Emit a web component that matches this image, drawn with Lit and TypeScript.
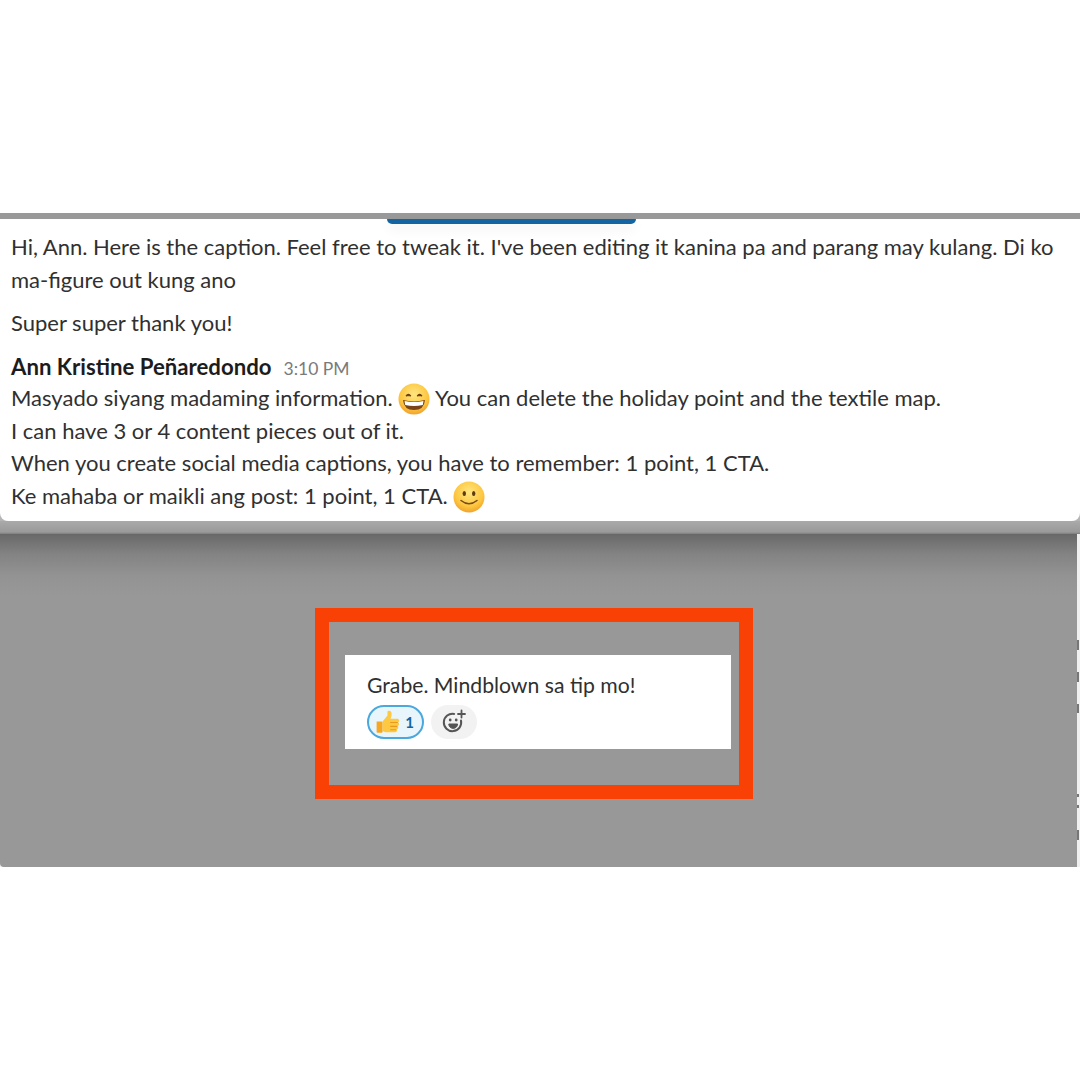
import { LitElement, css, html, svg } from 'lit';
import { customElement } from 'lit/decorators.js';

// clipped glyphs of the page behind, only their left edge shows at x 1077
const edgeMarks = [
  { gap: 106, h: 10 },
  { gap: 22, h: 10 },
  { gap: 22, h: 9 },
  { gap: 81, h: 3 },
  { gap: 8, h: 3 },
  { gap: 22, h: 10 },
];

const grinFace = svg`
  <path d="M8 13.2q2.4-3.6 4.8 0M19.2 13.2q2.4-3.6 4.8 0" fill="#7a4a16" stroke="#6b3d14" stroke-width="1.2" stroke-linejoin="round"></path>
  <path d="M5 17q11 2.8 22 0q-.8 10-11 10t-11-10z" fill="#7a4416"></path>
  <path d="M6.5 18q9.5 2.2 19 0l-.7 4q-9 2-17.6 0z" fill="#fff"></path>
`;

const smileFace = svg`
  <ellipse cx="11.3" cy="12.5" rx="1.7" ry="2.5" fill="#5f3a12"></ellipse>
  <ellipse cx="20.7" cy="12.5" rx="1.7" ry="2.5" fill="#5f3a12"></ellipse>
  <path d="M8 19.5q8 6.5 16 0" fill="none" stroke="#7a4a16" stroke-width="1.5" stroke-linecap="round"></path>
`;

const emoji = (id: string, face: unknown) => html`
  <svg class="emoji" viewBox="0 0 32 32">
    <defs>
      <radialGradient id=${id} cx="50%" cy="35%" r="70%">
        <stop offset="0%" stop-color="#ffe680"></stop>
        <stop offset="65%" stop-color="#fdc63f"></stop>
        <stop offset="100%" stop-color="#ee9a28"></stop>
      </radialGradient>
    </defs>
    <circle cx="16" cy="16" r="15.5" fill="url(#${id})"></circle>
    ${face}
  </svg>
`;

@customElement('app-root')
export class AppRoot extends LitElement {
  static styles = css`
    :host {
      display: block;
      width: 1080px;
      height: 1080px;
      overflow: hidden;
      background: #fff;
      font-family: Lato, 'Noto Sans', sans-serif;
      color: #1d1c1d;
    }

    .top-gap {
      height: 213px;
    }

    .band {
      height: 6px;
      background: #999;
    }

    .card-wrap {
      background: linear-gradient(#fff 290px, #b5b5b5 295px);
    }

    .card {
      position: relative;
      height: 302px;
      box-sizing: border-box;
      padding: 12px 11px 0;
      background: #fff;
      border-radius: 0 0 8px 8px;
      font-size: 22px;
      line-height: 32.5px;
      color: #303030;
      white-space: nowrap;
    }

    .tab {
      position: absolute;
      top: 0;
      left: 387px;
      width: 249px;
      height: 5px;
      background: #1264a3;
      border-radius: 0 0 10px 10px;
      box-shadow: 0 5px 12px rgba(0, 0, 0, 0.07);
    }

    .para {
      margin: 0 0 11px;
    }

    .sender {
      display: flex;
      align-items: baseline;
      gap: 12px;
      height: 31.5px;
      margin-top: 10px;
    }

    .name {
      font-size: 22.2px;
      font-weight: 700;
      color: #1d1c1d;
    }

    .time {
      font-size: 17.5px;
      color: #7a7a7a;
    }

    .line {
      height: 32.5px;
    }

    .emoji {
      width: 32px;
      height: 32px;
      vertical-align: -3px;
      margin: -6px 0;
    }

    .shelf {
      height: 13px;
      background: linear-gradient(#aaa, #a0a0a0 50%, #9a9a9a 85%, #7d7d7d);
    }

    .overlay {
      display: flex;
      height: 333px;
      background: #f0f0f0;
    }

    .dim {
      flex: 1;
      padding: 74px 0 0 315px;
      background: linear-gradient(#686868 0, #838383 20px, #939393 42px, #989898 62px);
      border-radius: 0 0 0 4px;
    }

    .edge {
      width: 3px;
      display: flex;
      flex-direction: column;
    }

    .tick {
      width: 2px;
      background: #777;
    }

    .frame {
      width: 438px;
      height: 191px;
      box-sizing: border-box;
      padding: 33px 0 0 16px;
      border: 14px solid #f94106;
    }

    .quote {
      width: 386px;
      height: 94px;
      box-sizing: border-box;
      padding: 17px 0 0 22px;
      background: #fff;
      font-size: 21.2px;
      line-height: 26px;
      color: #303030;
    }

    .reactions {
      display: flex;
      gap: 7px;
      margin-top: 7px;
    }

    .pill {
      height: 34px;
      box-sizing: border-box;
      border-radius: 17px;
      display: flex;
      align-items: center;
      justify-content: center;
    }

    .thumbs {
      width: 57px;
      gap: 4px;
      padding-right: 2px;
      background: #e8f5fa;
      border: 2px solid #4aa8de;
      color: #1264a3;
      font-size: 15px;
      font-weight: 700;
    }

    .add {
      width: 46px;
      background: #f2f2f2;
    }
  `;

  render() {
    return html`
      <div class="top-gap"></div>
      <div class="band"></div>
      <div class="card-wrap">
        <div class="card">
          <div class="tab"></div>
          <p class="para">
            Hi, Ann. Here is the caption. Feel free to tweak it. I've been editing it kanina pa and parang may kulang. Di ko<br />ma-figure out kung ano
          </p>
          <p class="para">Super super thank you!</p>
          <div class="sender"><span class="name">Ann Kristine Peñaredondo</span><span class="time">3:10 PM</span></div>
          <div class="line">Masyado siyang madaming information. ${emoji('grin', grinFace)} You can delete the holiday point and the textile map.</div>
          <div class="line">I can have 3 or 4 content pieces out of it.</div>
          <div class="line">When you create social media captions, you have to remember: 1 point, 1 CTA.</div>
          <div class="line">Ke mahaba or maikli ang post: 1 point, 1 CTA. ${emoji('smile', smileFace)}</div>
        </div>
      </div>
      <div class="shelf"></div>
      <div class="overlay">
        <div class="dim">
          <div class="frame">
            <div class="quote">
              Grabe. Mindblown sa tip mo!
              <div class="reactions">
                <div class="pill thumbs">
                  <svg width="26" height="26" viewBox="0 0 24 24">
                    <path d="M1.500 11.500H6a1 1 0 0 1 1 1V21a1 1 0 0 1-1 1H2.500a1 1 0 0 1-1-1z" fill="#f5a623"></path>
                    <path d="M7 11.500 11.500 6V2.800c0-1.600 3.400-1.800 3.800 1 .2 1.800-.3 3.600-1 5.200h6.200c2 0 2.400 2.600.8 3.300 1.400.8 1.200 2.900-.3 3.300 1 1 .6 2.800-.8 3.100.5 1.200-.2 2.800-1.800 2.800h-7c-1.800 0-3.200-.6-4.400-1.300z" fill="#fdc942"></path>
                    <path d="M14 12.500h7M14 16h6.500M14 19.200h5.500" stroke="#e89a1c" stroke-width="1" fill="none"></path>
                  </svg>
                  <span>1</span>
                </div>
                <div class="pill add">
                  <svg width="26" height="26" viewBox="0 0 26 26" fill="none" stroke="#555">
                    <path d="M20 11.500a8.700 8.700 0 1 1-6.800-6.600" stroke-width="2" stroke-linecap="round"></path>
                    <path d="M7.800 15h8.800a4.400 4.400 0 0 1-8.800 0z" fill="#555" stroke-width="1" stroke-linejoin="round"></path>
                    <circle cx="9.200" cy="11" r="1.400" fill="#555" stroke="none"></circle>
                    <circle cx="15.200" cy="11" r="1.400" fill="#555" stroke="none"></circle>
                    <path d="M20.500 1.500v7M17 5h7" stroke-width="1.800" stroke-linecap="round"></path>
                  </svg>
                </div>
              </div>
            </div>
          </div>
        </div>
        <div class="edge">
          ${edgeMarks.map(
            (m) => html`<div class="tick" style="margin-top:${m.gap}px;height:${m.h}px"></div>`,
          )}
        </div>
      </div>
    `;
  }
}

declare global {
  interface HTMLElementTagNameMap {
    'app-root': AppRoot;
  }
}
